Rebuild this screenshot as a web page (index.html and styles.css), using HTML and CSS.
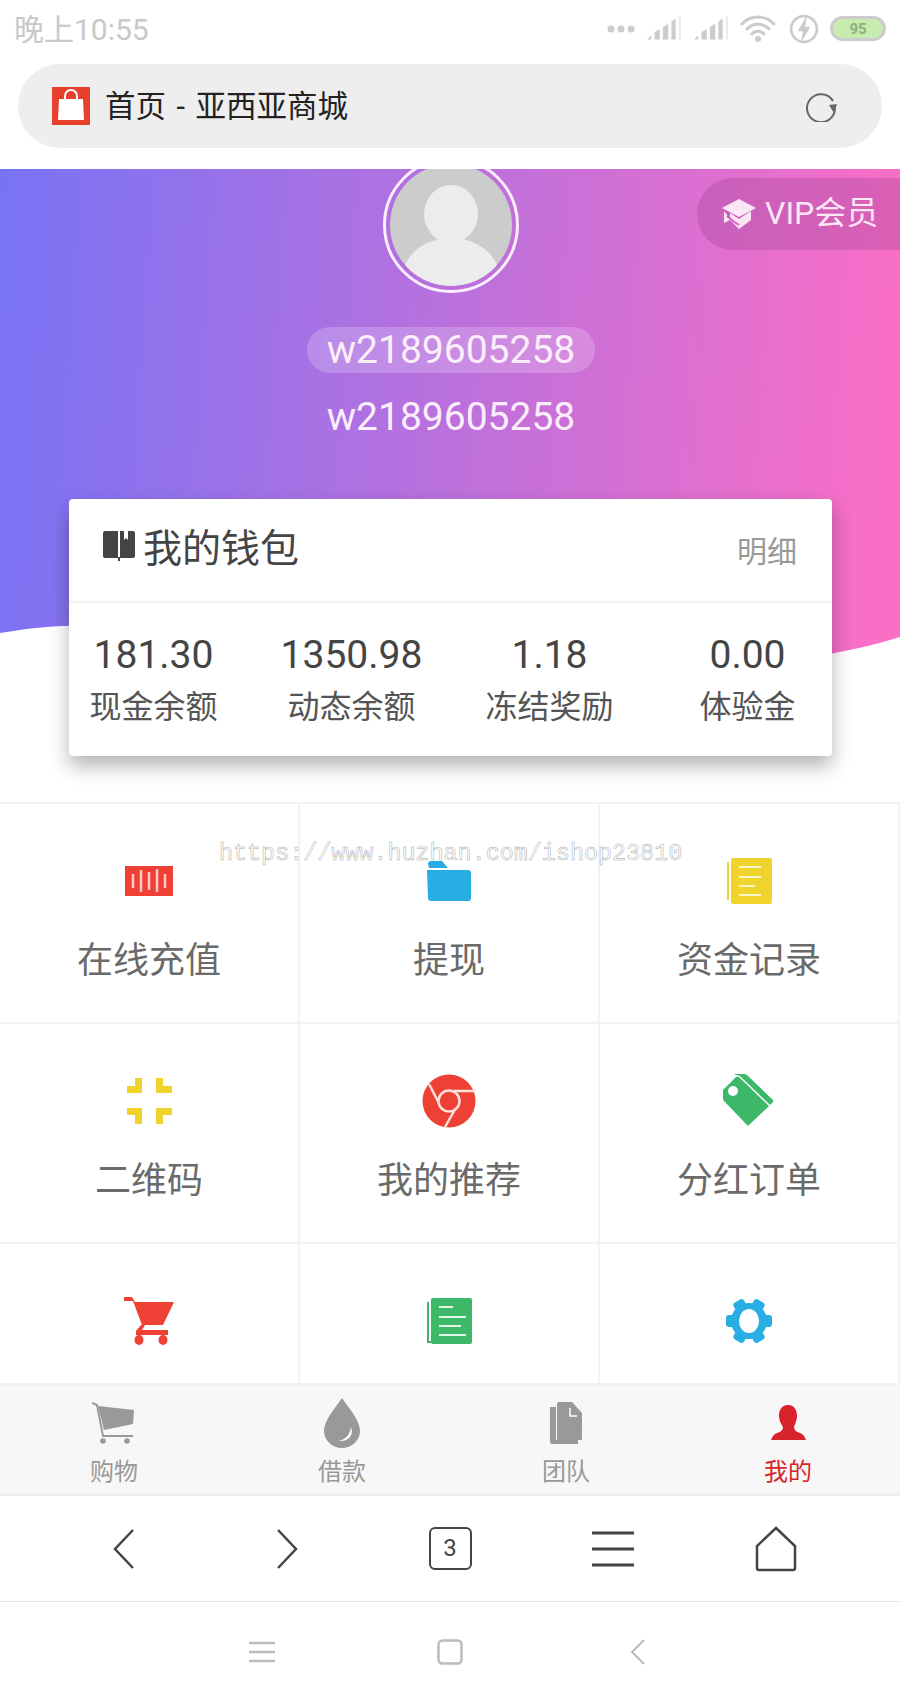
FILE: index.html
```html
<!DOCTYPE html>
<html lang="zh-CN">

<head>
    <meta charset="UTF-8">
    <meta name="viewport" content="width=device-width, initial-scale=1.0">
    <title>首页 - 亚西亚商城</title>
    <link rel="stylesheet" href="styles.css">
</head>

<body>
    <div class="status-bar">
        <span class="status-time">晚上10:55</span>
        <div class="status-icons">
            <svg width="28" height="10" viewBox="0 0 28 10"><circle cx="4" cy="5" r="3.5" /><circle cx="14" cy="5" r="3.5" /><circle cx="24" cy="5" r="3.5" /></svg>
            <svg width="36" height="26" viewBox="0 0 34 24"><path d="M1 22h4v-4zM8 22h5V12l-5 3zM16 22h5V7l-5 3zM24 22h4V2l-4 3z" /><path d="M31 22h2V0h-2z" opacity=".4" /></svg>
            <svg width="36" height="26" viewBox="0 0 34 24"><path d="M1 22h4v-4zM8 22h5V12l-5 3zM16 22h5V7l-5 3zM24 22h4V2l-4 3z" /><path d="M31 22h2V0h-2z" opacity=".4" /></svg>
            <svg width="38" height="28" viewBox="0 0 38 28"><path d="M2 9a22 22 0 0 1 32 0M7 14a15 15 0 0 1 22 0M12 19a8 8 0 0 1 12 0" fill="none" stroke="#ccc" stroke-width="3" stroke-linecap="round" /><circle cx="18" cy="24" r="3" /></svg>
            <svg width="30" height="30" viewBox="0 0 28 28"><circle cx="14" cy="14" r="12" fill="none" stroke="#ccc" stroke-width="2.5" /><path d="M17 1l-9 15h5l-2 11 9-15h-5z" /></svg>
            <div class="battery"><span>95</span></div>
        </div>
    </div>

    <div class="address-wrap">
        <div class="address-bar">
            <svg class="site-icon" width="38" height="38" viewBox="0 0 38 38"><rect width="38" height="38" fill="#e8402f" /><path d="M7 12h24l1 21H6z" fill="#fff" /><path d="M13 15V9a6 6 0 0 1 12 0v6" fill="none" stroke="#fff" stroke-width="2" /></svg>
            <span class="address-title">首页 - 亚西亚商城</span>
            <svg class="reload" width="32" height="32" viewBox="0 0 32 32"><path d="M27 11A14 14 0 1 0 29 18" fill="none" stroke="#666" stroke-width="2" /><path d="M31 14l-8 1 5 8z" fill="#666" /></svg>
        </div>
    </div>

    <div class="hero">
        <svg class="wave" width="900" height="180" viewBox="0 0 900 180"><path d="M0 11C40 4 70 3 100 4C350 10 600 60 760 42C810 36 860 28 900 15V180H0Z" fill="#fff" /></svg>
        <div class="vip">
            <svg width="34" height="30" viewBox="0 0 34 30"><path d="M17 0l17 9-17 9L0 9z" fill="#fbe6f5" /><path d="M2 12l0 12 6-3 9 9 12-9v-9l-12 8-9-6 0 6z" fill="#fbe6f5" /><path d="M5 17l6 5 6 4 " fill="none" stroke="#d463b4" stroke-width="2" /></svg>
            <span>VIP会员</span>
        </div>
        <div class="profile">
            <div class="avatar">
                <svg width="122" height="122" viewBox="0 0 122 122"><circle cx="61" cy="61" r="61" fill="#ccc" /><ellipse cx="61" cy="50" rx="27" ry="29" fill="#ececec" /><path d="M15 101C22 85 38 75 61 73C84 75 100 85 107 101A61 61 0 0 1 15 101Z" fill="#ececec" /></svg>
            </div>
            <div class="name-pill">w2189605258</div>
            <div class="name-line">w2189605258</div>
        </div>
        <div class="wallet">
            <div class="wallet-head">
                <div class="wallet-title">
                    <svg class="wallet-icon" width="32" height="30" viewBox="0 0 32 30"><path d="M0 2a2 2 0 0 1 2-2h13v27H2a2 2 0 0 1-2-2z" fill="#444" /><path d="M17 0h4v9l2-2 2 2V0h5a2 2 0 0 1 2 2v23a2 2 0 0 1-2 2H17z" fill="#444" /><path d="M16 26v4" stroke="#444" stroke-width="2" /></svg>
                    <span>我的钱包</span>
                </div>
                <span class="wallet-link">明细</span>
            </div>
            <div class="wallet-stats">
                <div class="stat"><div class="stat-num">181.30</div><div class="stat-label">现金余额</div></div>
                <div class="stat"><div class="stat-num">1350.98</div><div class="stat-label">动态余额</div></div>
                <div class="stat"><div class="stat-num">1.18</div><div class="stat-label">冻结奖励</div></div>
                <div class="stat"><div class="stat-num">0.00</div><div class="stat-label">体验金</div></div>
            </div>
        </div>
    </div>

    <div class="menu">
        <div class="menu-item">
            <div class="menu-icon"><svg width="48" height="30" viewBox="0 0 48 30"><rect width="48" height="30" fill="#ee4035" /><path d="M8 8v14M16 4v22M24 6v18M32 3v23M40 8v14" stroke="#fbc9c3" stroke-width="2.5" /></svg></div>
            <div class="menu-label">在线充值</div>
        </div>
        <div class="menu-item">
            <div class="menu-icon"><svg width="44" height="40" viewBox="0 0 44 40"><path d="M1 3a3 3 0 0 1 3-3h11l6 7H2z" fill="#29aee3" /><path d="M0 9h41a3 3 0 0 1 3 3v25a3 3 0 0 1-3 3H4a3 3 0 0 1-3-3z" fill="#29aee3" /></svg></div>
            <div class="menu-label">提现</div>
        </div>
        <div class="menu-item">
            <div class="menu-icon"><svg width="45" height="46" viewBox="0 0 45 46"><rect x="4" width="41" height="46" rx="2" fill="#f0d42b" /><path d="M1 4v38" stroke="#f0d42b" stroke-width="2" /><path d="M12 9h22M12 19h22M12 28h16M12 37h22" stroke="#fdf5c4" stroke-width="2" /></svg></div>
            <div class="menu-label">资金记录</div>
        </div>
        <div class="menu-item">
            <div class="menu-icon"><svg width="45" height="46" viewBox="0 0 45 46"><path d="M8 0h7v15H0V8h8zM29 0h7v8h9v7H29zM0 30h15v16H8V37H0zM29 30h16v7h-9v9h-7z" fill="#f0d42b" /></svg></div>
            <div class="menu-label">二维码</div>
        </div>
        <div class="menu-item">
            <div class="menu-icon"><svg width="54" height="54" viewBox="0 0 54 54"><circle cx="27" cy="27" r="26.5" fill="#ee4035" /><path d="M7 10l13 25M32 17h21M35 32L23 53" stroke="#fbe0dc" stroke-width="2.5" fill="none" /><circle cx="27" cy="27" r="10.5" fill="#ee4035" stroke="#fbe0dc" stroke-width="2.5" /></svg></div>
            <div class="menu-label">我的推荐</div>
        </div>
        <div class="menu-item">
            <div class="menu-icon"><svg width="54" height="54" viewBox="0 0 54 54"><path d="M3 14L14 3Q16 2 18 4L47 32L27 51Q26 52 25 51L2 27Q1 26 1 24V17Q1 15 3 14Z" fill="#3cb868" /><path d="M12 0H22Q24 0 26 2L51 26Q52 28 50 29L48 31L19 3Q17 1 14 1Z" fill="#3cb868" /><circle cx="11" cy="17" r="5" fill="#fff" /></svg></div>
            <div class="menu-label">分红订单</div>
        </div>
        <div class="menu-item">
            <div class="menu-icon"><svg width="50" height="48" viewBox="0 0 50 48"><path d="M0 0h8l3 5h39l-11 23H18L9 4H0z" fill="#ee4035" /><path d="M17 28l-5 6v4h32v-5H18l3-5z" fill="#ee4035" /><ellipse cx="15" cy="43" rx="4.5" ry="5" fill="#ee4035" /><ellipse cx="39" cy="43" rx="4.5" ry="5" fill="#ee4035" /></svg></div>
        </div>
        <div class="menu-item">
            <div class="menu-icon"><svg width="45" height="46" viewBox="0 0 45 46"><rect x="4" width="41" height="46" rx="2" fill="#3cb868" /><path d="M1 4v40h4" fill="none" stroke="#3cb868" stroke-width="2" /><path d="M12 9h14M12 19h27M12 28h22M12 37h27" stroke="#dff5e6" stroke-width="2" /></svg></div>
        </div>
        <div class="menu-item">
            <div class="menu-icon"><svg width="46" height="46" viewBox="0 0 46 46"><g fill="#29aee3"><circle cx="23" cy="23" r="18" /><rect x="17" width="12" height="12" rx="3" transform="rotate(30 23 23)" /><rect x="17" width="12" height="12" rx="3" transform="rotate(90 23 23)" /><rect x="17" width="12" height="12" rx="3" transform="rotate(150 23 23)" /><rect x="17" width="12" height="12" rx="3" transform="rotate(210 23 23)" /><rect x="17" width="12" height="12" rx="3" transform="rotate(270 23 23)" /><rect x="17" width="12" height="12" rx="3" transform="rotate(330 23 23)" /></g><ellipse cx="23" cy="23" rx="10" ry="12" fill="#fff" /></svg></div>
        </div>
    </div>

    <div class="tabbar">
        <div class="tab">
            <div class="tab-icon"><svg width="44" height="42" viewBox="0 0 44 42"><path d="M6 4l36 4-1 14-29 6z" fill="#999" /><path d="M0 1l5 2 6 31h30" fill="none" stroke="#999" stroke-width="2" /><circle cx="11" cy="39" r="2.8" fill="#999" /><circle cx="35" cy="39" r="2.8" fill="#999" /></svg></div>
            <span>购物</span>
        </div>
        <div class="tab">
            <div class="tab-icon"><svg width="36" height="50" viewBox="0 0 36 50"><path d="M18 0C24 9 36 22 36 33A18 17 0 0 1 0 33C0 22 12 9 18 0Z" fill="#999" /><path d="M14 43C21 42 26 37 27 29C30 37 25 44 14 43Z" fill="#fff" /></svg></div>
            <span>借款</span>
        </div>
        <div class="tab">
            <div class="tab-icon"><svg width="32" height="42" viewBox="0 0 32 42"><path d="M0 5h6v33h22v4H2a2 2 0 0 1-2-2z" fill="#999" /><path d="M7 2a2 2 0 0 1 2-2h13l10 11v26a1 1 0 0 1-1 1H7z" fill="#999" /><path d="M20 6v8h7" fill="none" stroke="#fff" stroke-width="1.5" /></svg></div>
            <span>团队</span>
        </div>
        <div class="tab tab-active">
            <div class="tab-icon"><svg width="35" height="36" viewBox="0 0 35 36"><path d="M17 0C24 0 26 6 26 11C26 15 24 19 23 22C23 25 25 27 29 28C32 29 34 32 35 35H0C1 32 3 29 6 28C10 27 12 25 12 22C10 19 8 15 8 11C8 6 10 0 17 0Z" fill="#d9232a" /></svg></div>
            <span>我的</span>
        </div>
    </div>

    <div class="toolbar">
        <div class="tool"><svg width="22" height="40" viewBox="0 0 22 40"><path d="M20 1L2 20l18 19" fill="none" stroke="#444" stroke-width="2.5" /></svg></div>
        <div class="tool"><svg width="22" height="40" viewBox="0 0 22 40"><path d="M2 1l18 19L2 39" fill="none" stroke="#444" stroke-width="2.5" /></svg></div>
        <div class="tool"><div class="tab-count">3</div></div>
        <div class="tool"><svg width="42" height="36" viewBox="0 0 42 36"><path d="M0 2h42M0 18h42M0 34h42" stroke="#444" stroke-width="3" /></svg></div>
        <div class="tool"><svg width="42" height="46" viewBox="0 0 42 46"><path d="M21 2L40 20V42a2 2 0 0 1-2 2H4a2 2 0 0 1-2-2V20z" fill="none" stroke="#444" stroke-width="2.5" /></svg></div>
    </div>

    <div class="navbar">
        <div class="nav-btn"><svg width="26" height="22" viewBox="0 0 26 22"><path d="M0 2h26M0 11h26M0 20h26" stroke="#bbb" stroke-width="2.5" /></svg></div>
        <div class="nav-btn"><svg width="26" height="26" viewBox="0 0 26 26"><rect x="1.5" y="1.5" width="23" height="23" rx="4" fill="none" stroke="#bbb" stroke-width="2.5" /></svg></div>
        <div class="nav-btn"><svg width="16" height="26" viewBox="0 0 16 26"><path d="M14 1L2 13l12 12" fill="none" stroke="#bbb" stroke-width="2" /></svg></div>
    </div>

    <div class="watermark">https://www.huzhan.com/ishop23810</div>
</body>

</html>
```

FILE: styles.css
```css
* {
    box-sizing: border-box;
}

body {
    position: relative;
    width: 900px;
    height: 1701px;
    margin: 0;
    overflow: hidden;
    background-color: white;
    font-family: Roboto, "Noto Sans CJK SC", sans-serif;
}

svg {
    display: block;
}

.status-bar {
    display: flex;
    align-items: center;
    justify-content: space-between;
    height: 60px;
    padding: 0 14px;
}

.status-time {
    padding-bottom: 6px;
    font-size: 30px;
    color: #c9c9c9;
}

.status-icons {
    display: flex;
    align-items: center;
    gap: 11px;
    padding-bottom: 3px;
    fill: #ccc;
}

.battery {
    display: flex;
    align-items: center;
    justify-content: center;
    width: 56px;
    height: 25px;
    border: 3px solid #ccc;
    border-radius: 13px;
    background-color: #c8ebb0;
    font-size: 15px;
    font-weight: bold;
    color: #8fae7d;
}

.address-wrap {
    height: 109px;
    padding: 4px 18px 0;
}

.address-bar {
    display: flex;
    align-items: center;
    height: 84px;
    padding: 0 44px 0 34px;
    border-radius: 42px;
    background-color: #eee;
}

.address-title {
    flex: 1;
    margin-left: 15px;
    padding-bottom: 4px;
    font-size: 30.5px;
    word-spacing: 3px;
    color: #222;
}

.hero {
    position: relative;
    height: 633px;
    overflow: hidden;
    background: linear-gradient(94deg, #7873f5, #ff6ec4);
}

.wave {
    position: absolute;
    left: 0;
    bottom: 0;
}

.vip {
    position: absolute;
    top: 9px;
    right: 0;
    display: flex;
    align-items: center;
    gap: 9px;
    width: 203px;
    height: 72px;
    padding-left: 25px;
    border-radius: 36px 0 0 36px;
    background-color: rgba(160, 70, 150, 0.35);
    font-size: 32px;
    color: #fbe6f5;
}

.vip span {
    padding-bottom: 9px;
}

.profile {
    position: relative;
    display: flex;
    flex-direction: column;
    align-items: center;
    margin-top: -12px;
    padding-left: 2px;
    color: #fbeefa;
}

.avatar {
    padding: 4px;
    border: 3px solid #fbeefa;
    border-radius: 50%;
}

.name-pill {
    height: 46px;
    margin-top: 34px;
    padding: 0 20px;
    line-height: 46px;
    border-radius: 23px;
    background-color: rgba(255, 255, 255, 0.2);
    font-size: 39px;
}

.name-line {
    height: 46px;
    margin-top: 21px;
    line-height: 46px;
    font-size: 39px;
}

.wallet {
    position: relative;
    width: 763px;
    height: 257px;
    margin: 59px 0 0 69px;
    border-radius: 4px;
    background-color: white;
    box-shadow: 0 10px 20px rgba(0, 0, 0, 0.3);
}

.wallet-head {
    display: flex;
    align-items: center;
    justify-content: space-between;
    height: 104px;
    padding: 0 35px 10px;
    border-bottom: 2px solid #f3f3f3;
}

.wallet-title {
    display: flex;
    align-items: center;
    gap: 8px;
    font-size: 39px;
    color: #444;
}

.wallet-icon {
    margin: 2px 0 0 -1px;
}

.wallet-link {
    margin-top: 8px;
    font-size: 30px;
    color: #999;
}

.wallet-stats {
    display: grid;
    grid-template-columns: repeat(4, 198px);
    justify-content: center;
    padding-top: 29px;
    text-align: center;
}

.stat-num {
    height: 46px;
    line-height: 46px;
    font-size: 39px;
    color: #444;
}

.stat-label {
    height: 40px;
    margin-top: 9px;
    line-height: 40px;
    font-size: 32px;
    color: #555;
}

.menu {
    display: grid;
    grid-template-columns: repeat(3, 300px);
    grid-auto-rows: 220px;
    height: 581px;
    overflow: hidden;
    border-top: 2px solid #f3f3f3;
}

.menu-item {
    display: flex;
    flex-direction: column;
    align-items: center;
    padding-top: 47px;
    border-right: 2px solid #f3f3f3;
    border-bottom: 2px solid #f3f3f3;
}

.menu-icon {
    display: flex;
    align-items: center;
    justify-content: center;
    height: 60px;
}

.menu-label {
    height: 48px;
    margin-top: 26px;
    line-height: 48px;
    font-size: 36px;
    color: #6a6a6a;
}

.tabbar {
    display: grid;
    grid-template-columns: 228px 228px 220px 224px;
    height: 113px;
    border-top: 2px solid #f0f0f0;
    border-bottom: 2px solid #eee;
    background-color: #f7f7f7;
    font-size: 24px;
    color: #999;
}

.tab {
    display: flex;
    flex-direction: column;
    align-items: center;
    padding-top: 10px;
}

.tab-icon {
    display: flex;
    align-items: center;
    height: 56px;
}

.tab span {
    margin-top: 4px;
    line-height: 34px;
}

.tab-active {
    color: #d9232a;
}

.toolbar {
    display: flex;
    justify-content: center;
    align-items: center;
    height: 106px;
    border-bottom: 1px solid #e3e3e3;
}

.tool {
    display: flex;
    justify-content: center;
    width: 163px;
}

.tab-count {
    width: 43px;
    height: 43px;
    line-height: 39px;
    border: 2.5px solid #444;
    border-radius: 6px;
    text-align: center;
    font-size: 24px;
    color: #444;
}

.navbar {
    display: flex;
    justify-content: center;
    align-items: center;
    height: 99px;
}

.nav-btn {
    display: flex;
    justify-content: center;
    width: 188px;
}

.watermark {
    position: absolute;
    top: 840px;
    left: 219px;
    font-family: "Liberation Mono", monospace;
    font-size: 23.4px;
    line-height: 28px;
    color: rgba(255, 255, 255, 0.5);
    -webkit-text-stroke: 0.5px #aaa;
}
```
